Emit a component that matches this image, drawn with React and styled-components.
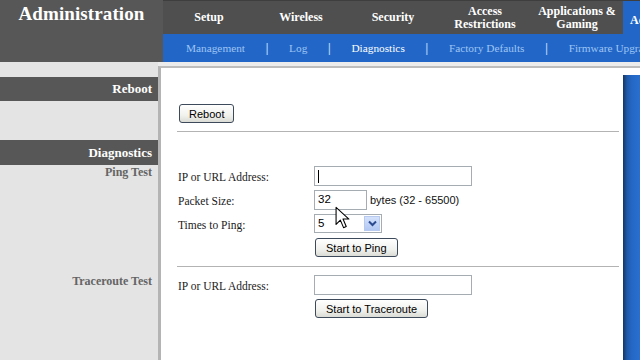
import React from "react";
import styled, { createGlobalStyle } from "styled-components";

const Global = createGlobalStyle`
  html, body { margin: 0; padding: 0; }
  body { width: 640px; height: 360px; overflow: hidden; background: #e5e5e5; font-family: "Liberation Serif", serif; }
`;

const Page = styled.div`
  position: relative;
  width: 640px;
  height: 360px;
  overflow: hidden;
  display: flex;
  flex-direction: column;
`;

const Header = styled.header`
  display: grid;
  grid-template-columns: 163px 1fr;
  height: 62px;
`;

const Brand = styled.div`
  background: #575757;
  color: #fff;
  font: bold 19px "Liberation Serif", serif;
  text-align: center;
  padding-top: 3px;
  letter-spacing: 0.1px;
`;

const NavStack = styled.div`
  display: flex;
  flex-direction: column;
  min-width: 0;
`;

const Tabs = styled.nav`
  height: 34px;
  background: #4f4f4f;
  border-top: 1px solid #3e3e3e;
  box-sizing: border-box;
  display: flex;
`;

const Tab = styled.div`
  flex: ${(p) => (p.$active ? "1 1 auto" : "0 0 92px")};
  display: flex;
  align-items: center;
  justify-content: ${(p) => (p.$active ? "flex-start" : "center")};
  padding-left: ${(p) => (p.$active ? "7px" : "0")};
  padding-top: ${(p) => (p.$active ? "5px" : "0")};
  background: ${(p) => (p.$active ? "#2267c7" : "transparent")};
  color: #fff;
  font: bold 12px/13px "Liberation Serif", serif;
  text-align: center;
  white-space: nowrap;
  overflow: hidden;
  min-width: 0;
`;

const SubNav = styled.nav`
  height: 28px;
  background: #2267c7;
  display: flex;
  align-items: center;
  gap: 20.5px;
  padding-left: 23px;
  white-space: nowrap;
  overflow: hidden;
  font: 11.3px "Liberation Serif", serif;
`;

const SubItem = styled.span`
  color: ${(p) => (p.$active ? "#ffffff" : "#9ec4f4")};
  flex-shrink: 0;
`;

const Sep = styled.span`
  color: #b9d6fa;
  font-family: "Liberation Sans", sans-serif;
  font-size: 12px;
  flex-shrink: 0;
`;

const Body = styled.div`
  flex: 1;
  display: grid;
  grid-template-columns: 158px 1fr;
  background: #e5e5e5;
`;

const Side = styled.aside`
  display: flex;
  flex-direction: column;
  padding-top: 15px;
  background: #e4e4e4;
`;

const SectionBar = styled.div`
  height: ${(p) => p.$h}px;
  margin-top: ${(p) => p.$mt || 0}px;
  background: #575757;
  color: #fff;
  font: bold 13px "Liberation Serif", serif;
  display: flex;
  align-items: center;
  justify-content: flex-end;
  padding-right: 6px;
`;

const SubLabel = styled.div`
  margin-top: ${(p) => p.$mt}px;
  color: #646464;
  font: bold 12px/14px "Liberation Serif", serif;
  text-align: right;
  padding-right: 6px;
`;

const MainWrap = styled.div`
  display: flex;
  flex-direction: column;
  padding-top: 4px;
  background: #ececec;
`;

const Panel = styled.main`
  flex: 1;
  display: grid;
  grid-template-columns: 1fr 17px;
  background: #fff;
  border-top: 2px solid #bdbdbd;
  border-left: 3px solid #b4b4b4;
`;

const Content = styled.div`
  padding: 36px 4px 0 17px;
  display: flex;
  flex-direction: column;
`;

const BlueEdge = styled.div`
  margin-top: 7px;
  background: linear-gradient(90deg, #17365f 0px, #1f59a8 4px, #2468c6 9px, #2a6fce 100%);
`;

const Button = styled.button`
  align-self: flex-start;
  height: 19px;
  padding: 0 ${(p) => p.$px || 9}px;
  margin-left: 1px;
  border: 1px solid #3d4a5c;
  border-radius: 3px;
  background: linear-gradient(#ffffff, #f1f1ee 60%, #dcdcd6);
  font: 11px "Liberation Sans", sans-serif;
  color: #000;
  box-sizing: border-box;
  line-height: 16px;
`;

const Divider = styled.hr`
  width: calc(100% + 1px);
  margin: ${(p) => p.$mt}px 0 0 -1px;
  border: 0;
  border-top: 1px solid #b3b3b3;
  height: 0;
`;

const Form = styled.div`
  display: grid;
  grid-template-columns: 136px 1fr;
  grid-auto-rows: 20px;
  row-gap: 4px;
  margin-top: ${(p) => p.$mt}px;
  align-items: center;
`;

const Label = styled.label`
  font: 11.5px "Liberation Serif", serif;
  color: #1a1a1a;
  padding-top: 1px;
`;

const FieldRow = styled.div`
  display: flex;
  align-items: flex-start;
  height: 20px;
  gap: 3px;
  grid-column: ${(p) => (p.$span ? "2" : "auto")};
`;

const Input = styled.div`
  width: ${(p) => p.$w}px;
  height: 20px;
  box-sizing: border-box;
  border: 1px solid #a5acb2;
  font: 11.5px "Liberation Sans", sans-serif;
  padding: 2px 0 0 3px;
  color: #000;
  background: #fff;
`;

const Caret = styled.span`
  display: inline-block;
  width: 1px;
  height: 13px;
  background: #000;
  margin-top: 1px;
`;

const Note = styled.span`
  font: 11px "Liberation Sans", sans-serif;
  color: #111;
  line-height: 20px;
`;

const Select = styled.div`
  width: 68px;
  height: 19px;
  box-sizing: border-box;
  border: 1px solid #a5acb2;
  display: flex;
  align-items: stretch;
  font: 11.5px "Liberation Sans", sans-serif;
  background: #fff;
`;

const SelectValue = styled.span`
  flex: 1;
  padding: 2px 0 0 3px;
`;

const SelectArrow = styled.span`
  width: 16px;
  margin: 1px;
  background: linear-gradient(#d3e1fb, #b3c8f3);
  border: 1px solid #b7c9ef;
  box-sizing: border-box;
  display: flex;
  align-items: center;
  justify-content: center;
`;

const Pointer = styled.svg`
  position: absolute;
  left: 335px;
  top: 206px;
`;

export default function App() {
  return (
    <Page>
      <Global />
      <Header>
        <Brand>Administration</Brand>
        <NavStack>
          <Tabs>
            <Tab>Setup</Tab>
            <Tab>Wireless</Tab>
            <Tab>Security</Tab>
            <Tab>Access<br />Restrictions</Tab>
            <Tab>Applications &amp;<br />Gaming</Tab>
            <Tab $active>Administration</Tab>
          </Tabs>
          <SubNav>
            <SubItem>Management</SubItem>
            <Sep>|</Sep>
            <SubItem>Log</SubItem>
            <Sep>|</Sep>
            <SubItem $active>Diagnostics</SubItem>
            <Sep>|</Sep>
            <SubItem>Factory Defaults</SubItem>
            <Sep>|</Sep>
            <SubItem>Firmware Upgrade</SubItem>
          </SubNav>
        </NavStack>
      </Header>
      <Body>
        <Side>
          <SectionBar $h={24}>Reboot</SectionBar>
          <SectionBar $h={25} $mt={39}>Diagnostics</SectionBar>
          <SubLabel $mt={0}>Ping Test</SubLabel>
          <SubLabel $mt={95}>Traceroute Test</SubLabel>
        </Side>
        <MainWrap>
          <Panel>
            <Content>
              <Button $px={9}>Reboot</Button>
              <Divider $mt={8} />
              <Form $mt={34}>
                <Label>IP or URL Address:</Label>
                <FieldRow>
                  <Input $w={158}><Caret /></Input>
                </FieldRow>
                <Label>Packet Size:</Label>
                <FieldRow>
                  <Input $w={53}>32</Input>
                  <Note>bytes (32 - 65500)</Note>
                </FieldRow>
                <Label>Times to Ping:</Label>
                <FieldRow>
                  <Select>
                    <SelectValue>5</SelectValue>
                    <SelectArrow>
                      <svg width="9" height="7" viewBox="0 0 9 7">
                        <path d="M1 1.5 L4.5 5 L8 1.5" fill="none" stroke="#2b4a8f" strokeWidth="2" />
                      </svg>
                    </SelectArrow>
                  </Select>
                </FieldRow>
                <FieldRow $span>
                  <Button $px={10}>Start to Ping</Button>
                </FieldRow>
              </Form>
              <Divider $mt={8} />
              <Form $mt={8}>
                <Label>IP or URL Address:</Label>
                <FieldRow>
                  <Input $w={158} />
                </FieldRow>
                <FieldRow $span>
                  <Button $px={10}>Start to Traceroute</Button>
                </FieldRow>
              </Form>
            </Content>
            <BlueEdge />
          </Panel>
        </MainWrap>
      </Body>
      <Pointer width="15" height="24" viewBox="0 0 14 22">
        <path d="M1 1 L1 17 L5 13 L8 20 L10.5 19 L7.5 12 L13 12 Z" fill="#fff" stroke="#000" strokeWidth="1" strokeLinejoin="round" />
      </Pointer>
    </Page>
  );
}
